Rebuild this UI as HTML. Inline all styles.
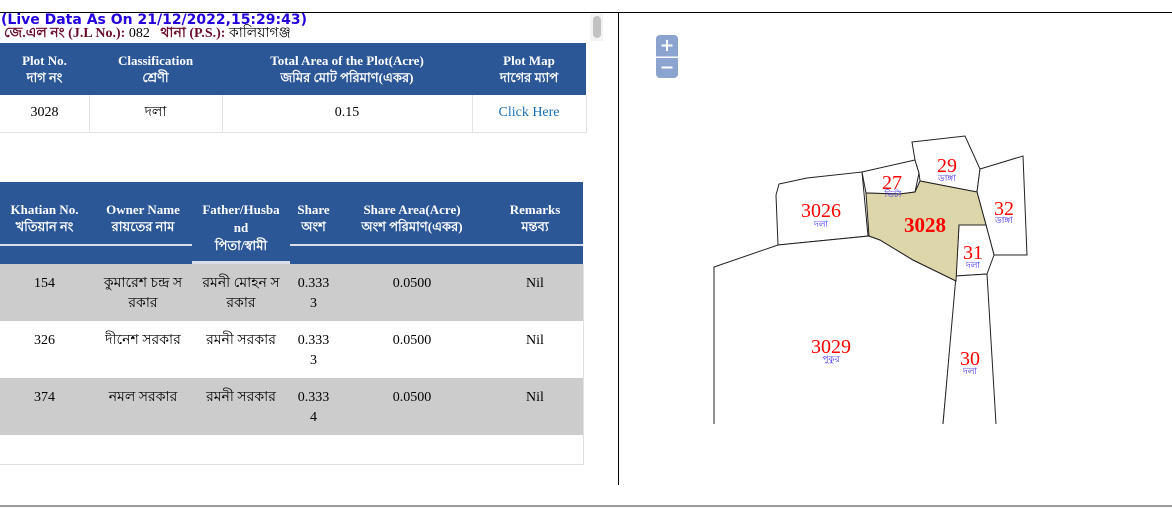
<!DOCTYPE html>
<html><head><meta charset="utf-8"><style>
*{margin:0;padding:0;box-sizing:border-box}
body{width:1172px;height:508px;background:#fff;position:relative;overflow:hidden;font-family:"Liberation Serif","Noto Serif CJK SC",serif;font-size:14px;color:#000}
.a{position:absolute}
.hd{background:#2b5797;color:#fff;font-weight:bold;font-size:13px;text-align:center;line-height:17px}
.c{position:absolute;text-align:center}
.bn{font-family:"Liberation Sans","Noto Sans CJK SC",sans-serif}
</style></head><body>
<div class="a" style="left:0;top:12px;width:1172px;height:1px;background:#000"></div>
<div class="a" style="left:618px;top:12px;width:1px;height:473px;background:#000"></div>
<div class="a" style="left:0;top:505px;width:1172px;height:2px;background:#999"></div>
<div class="a" style="left:590px;top:13px;width:13px;height:28px;background:#f3f3f3"></div>
<div class="a" style="left:593px;top:16px;width:8px;height:22px;border-radius:4px;background:#c2c2c2"></div>

<div class="a bn" style="left:1px;top:12px;font-size:14px;font-weight:bold;color:#2200dd;font-family:'DejaVu Sans',sans-serif">(Live Data As On 21/12/2022,15:29:43)</div>
<div class="a" style="left:4px;top:26px;font-size:14px;line-height:16px;white-space:nowrap"><b style="color:#6b0f2b">জে.এল নং (J.L No.):</b> 082 &nbsp; <b style="color:#6b0f2b">থানা (P.S.):</b> কালিয়াগঞ্জ</div>

<!-- table 1 -->
<div class="a hd" style="left:0;top:43px;width:586px;height:52px"></div>
<div class="c hd" style="left:0;top:52px;width:89px;background:none">Plot No.<br>দাগ নং</div>
<div class="c hd" style="left:89px;top:52px;width:133px;background:none">Classification<br>শ্রেণী</div>
<div class="c hd" style="left:222px;top:52px;width:250px;background:none">Total Area of the Plot(Acre)<br>জমির মোট পরিমাণ(একর)</div>
<div class="c hd" style="left:472px;top:52px;width:114px;background:none">Plot Map<br>দাগের ম্যাপ</div>
<div class="a" style="left:0;top:95px;width:587px;height:38px;border-right:1px solid #e2e2e2;border-bottom:1px solid #e2e2e2"></div>
<div class="a" style="left:89px;top:95px;width:1px;height:37px;background:#e2e2e2"></div>
<div class="a" style="left:222px;top:95px;width:1px;height:37px;background:#e2e2e2"></div>
<div class="a" style="left:472px;top:95px;width:1px;height:37px;background:#e2e2e2"></div>
<div style="position:absolute;left:0;top:104px;line-height:18px">
<div class="c" style="left:0;width:89px">3028</div>
<div class="c" style="left:89px;width:133px">দলা</div>
<div class="c" style="left:222px;width:250px">0.15</div>
<div class="c" style="left:472px;width:114px;color:#1a6fb5">Click Here</div>
</div>

<!-- table 2 -->
<div class="a hd" style="left:0;top:182px;width:583px;height:82px"></div>
<div class="a" style="left:0;top:244px;width:192px;height:2px;background:#d8dde8"></div>
<div class="a" style="left:290px;top:244px;width:293px;height:2px;background:#d8dde8"></div>
<div class="a" style="left:192px;top:261px;width:98px;height:3px;background:#d8dde8"></div>
<div class="c hd" style="left:0;top:201px;width:89px;background:none">Khatian No.<br>খতিয়ান নং</div>
<div class="c hd" style="left:89px;top:201px;width:108px;background:none">Owner Name<br>রায়তের নাম</div>
<div class="c hd" style="left:192px;top:201px;width:98px;background:none;line-height:18px">Father/Husba<br>nd<br>পিতা/স্বামী</div>
<div class="c hd" style="left:290px;top:201px;width:47px;background:none">Share<br>অংশ</div>
<div class="c hd" style="left:337px;top:201px;width:150px;background:none">Share Area(Acre)<br>অংশ পরিমাণ(একর)</div>
<div class="c hd" style="left:487px;top:201px;width:96px;background:none">Remarks<br>মন্তব্য</div>

<div class="a" style="left:0;top:264px;width:583px;height:57px;background:#cccccc"></div>
<div class="a" style="left:0;top:378px;width:583px;height:57px;background:#cccccc"></div>
<div class="a" style="left:0;top:264px;width:584px;height:201px;border-right:1px solid #e0e0e0;border-bottom:1px solid #e0e0e0"></div>

<div style="position:absolute;left:0;top:274px;line-height:20px">
<div class="c" style="left:0;width:89px">154</div>
<div class="c" style="left:89px;width:108px">কুমারেশ চন্দ্র স<br>রকার</div>
<div class="c" style="left:192px;width:98px">রমনী মোহন স<br>রকার</div>
<div class="c" style="left:290px;width:47px">0.333<br>3</div>
<div class="c" style="left:337px;width:150px">0.0500</div>
<div class="c" style="left:487px;width:96px">Nil</div>
</div>
<div style="position:absolute;left:0;top:331px;line-height:20px">
<div class="c" style="left:0;width:89px">326</div>
<div class="c" style="left:89px;width:108px">দীনেশ সরকার</div>
<div class="c" style="left:192px;width:98px">রমনী সরকার</div>
<div class="c" style="left:290px;width:47px">0.333<br>3</div>
<div class="c" style="left:337px;width:150px">0.0500</div>
<div class="c" style="left:487px;width:96px">Nil</div>
</div>
<div style="position:absolute;left:0;top:388px;line-height:20px">
<div class="c" style="left:0;width:89px">374</div>
<div class="c" style="left:89px;width:108px">নমল সরকার</div>
<div class="c" style="left:192px;width:98px">রমনী সরকার</div>
<div class="c" style="left:290px;width:47px">0.333<br>4</div>
<div class="c" style="left:337px;width:150px">0.0500</div>
<div class="c" style="left:487px;width:96px">Nil</div>
</div>

<!-- map -->
<svg class="a" style="left:0;top:0" width="1172" height="508">
<rect x="656" y="35" width="22" height="43" rx="4" fill="#8aa3cf"/>
<rect x="656" y="56.5" width="22" height="1.5" fill="#fff"/>
<path d="M667 40v11M661.5 45.5h11M661.5 67.5h11" stroke="#fff" stroke-width="2"/>
<g fill="#fff" stroke="#222" stroke-width="1">
<polygon points="779,184 807,178 862,172 868,236 778,245 776,195"/>
<polygon points="862,172 915,160 919,173 915,192 900,194 866,193"/>
<polygon points="912,142 965,136 980,169 977,192 920,181 919,173 915,160"/>
<polygon points="980,169 1023,156 1027,255 994,255 986,225 977,192"/>
<polygon points="959,225 986,225 994,255 987,274 956,276"/>
<polyline points="714,424 714,267 778,245 869,236 880,240 913,260 956,281 943,424" />
<polyline points="943,424 956,276 987,274 996,424"/>
<polygon points="866,193 900,194 915,192 920,181 977,192 986,225 959,225 956,281 913,260 880,240 869,236" fill="#ded6ab"/>
</g>
<g fill="#f00" font-family="Liberation Serif,serif" text-anchor="middle" font-size="20">
<text x="821" y="217">3026</text><text x="892" y="189">27</text><text x="947" y="172">29</text>
<text x="1004" y="215">32</text><text x="925" y="232" font-weight="bold" font-size="21">3028</text>
<text x="973" y="259">31</text><text x="831" y="353">3029</text><text x="970" y="365">30</text>
</g>
<g fill="#3322ee" font-family="Liberation Sans,Noto Sans CJK SC,sans-serif" text-anchor="middle" font-size="9">
<text x="821" y="227">দলা</text><text x="893" y="197">ভিটা</text><text x="947" y="181">ডাঙ্গা</text>
<text x="1004" y="223">ডাঙ্গা</text><text x="973" y="268">দলা</text><text x="831" y="362">পুকুর</text><text x="970" y="374">দলা</text>
</g>
</svg>
</body></html>
